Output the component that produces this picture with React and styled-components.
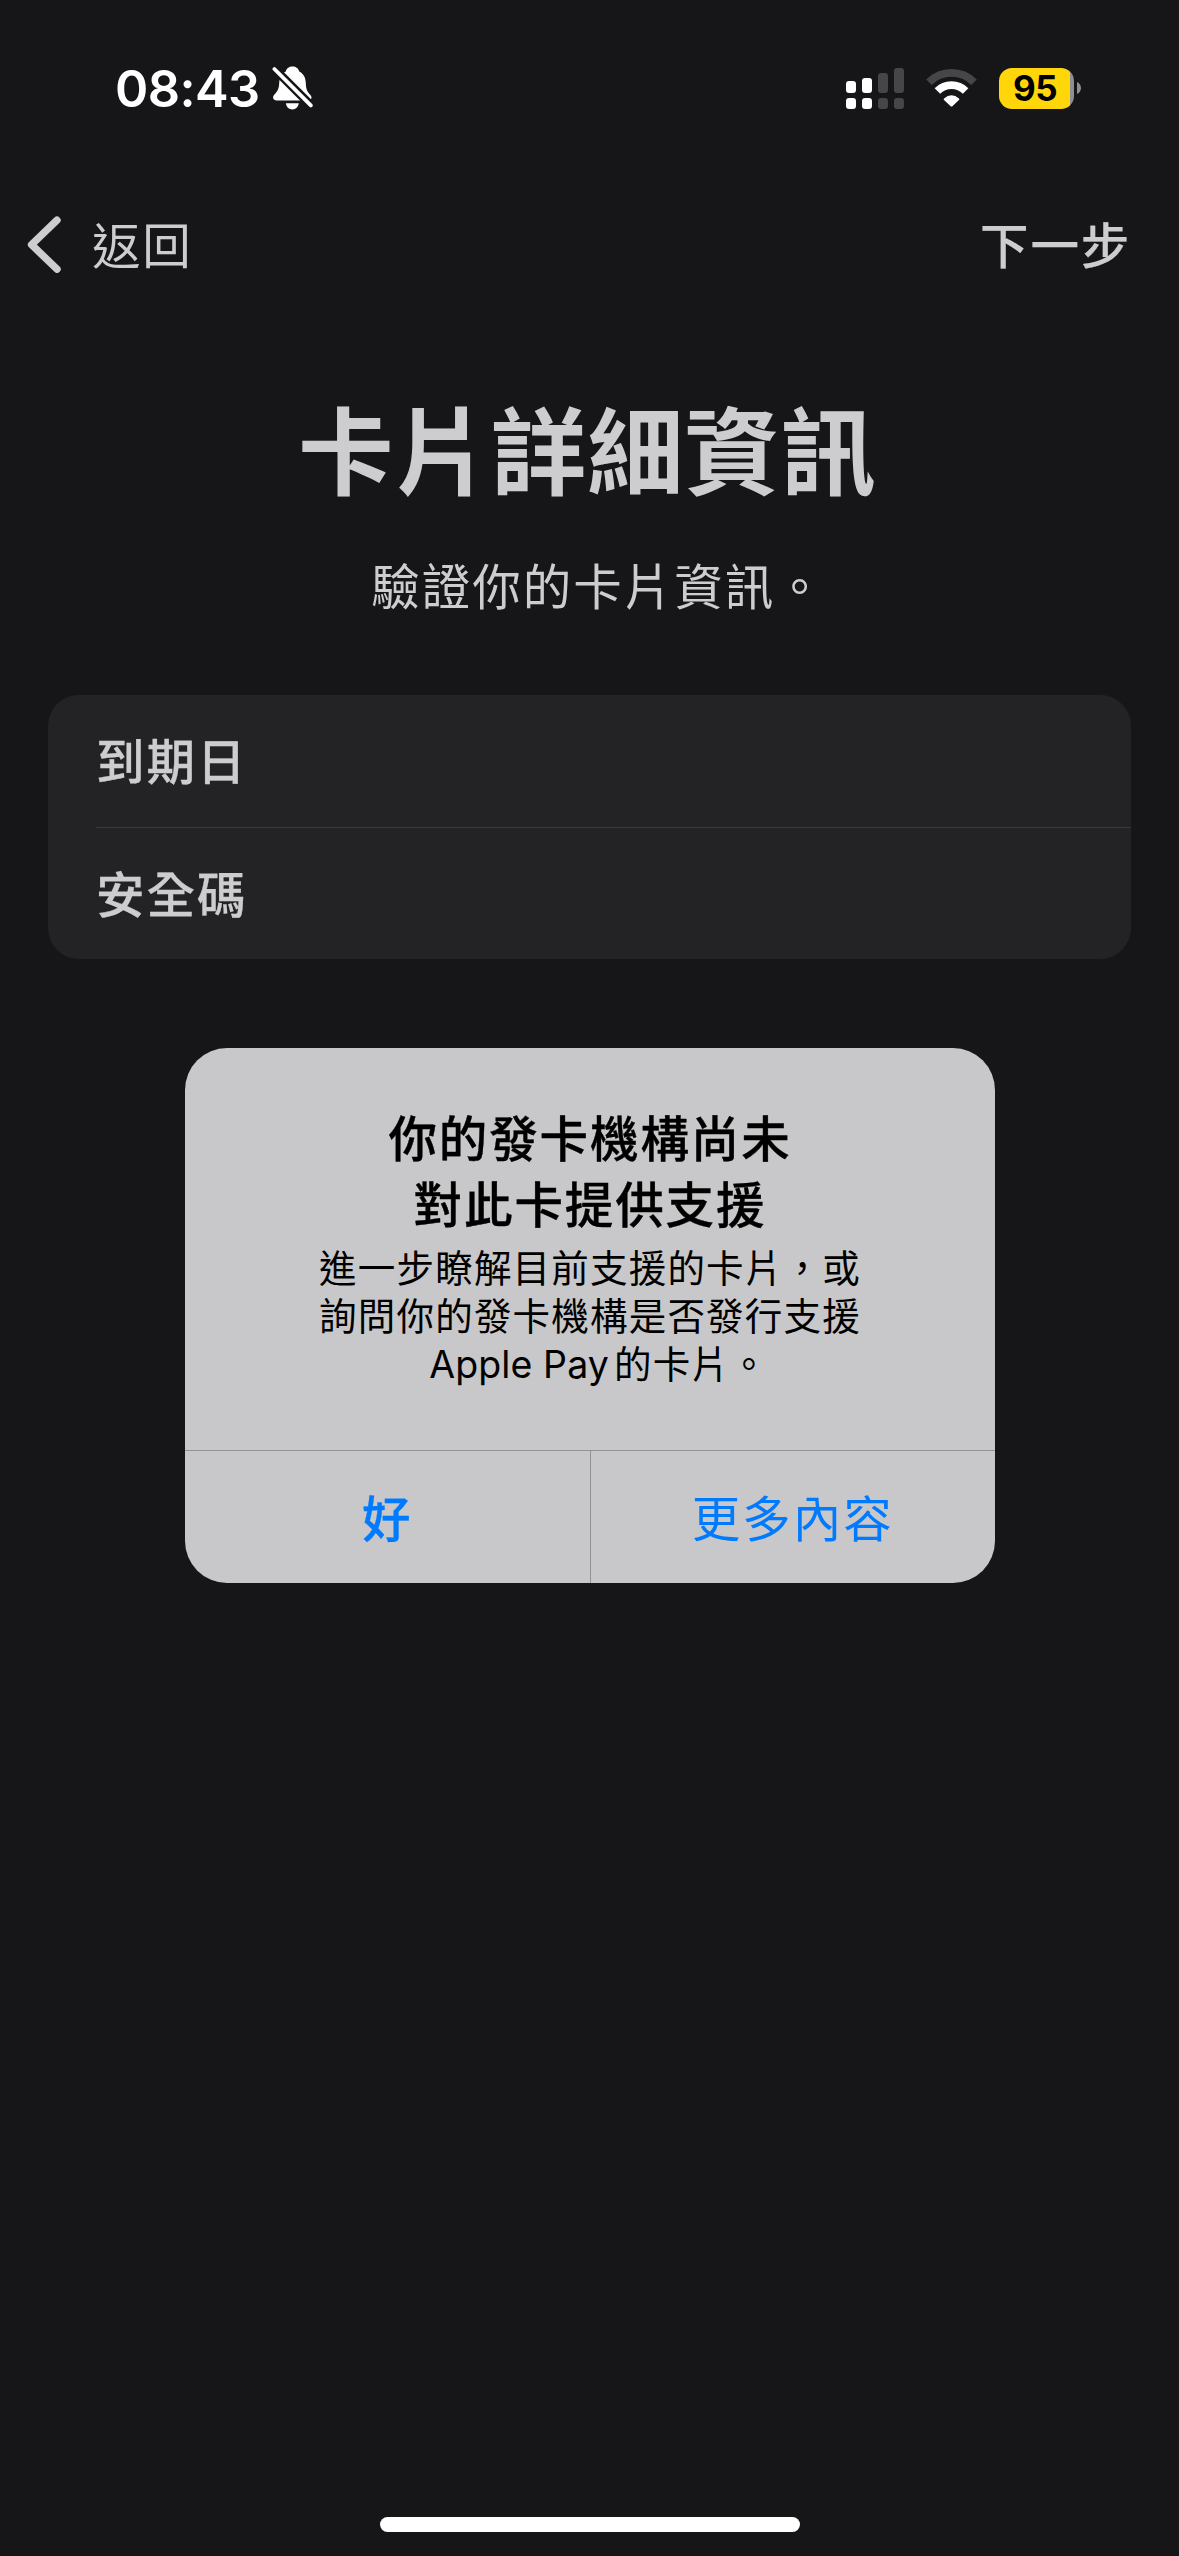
import React from "react";
import styled, { createGlobalStyle } from "styled-components";

const GlobalStyle = createGlobalStyle`
  * { box-sizing: border-box; }
  html, body { margin: 0; padding: 0; background: #161618; }
  button { border: 0; padding: 0; margin: 0; background: none; font: inherit; color: inherit; }
`;

const CJK = `"Noto Sans CJK TC", "Noto Sans CJK SC", sans-serif`;

const Screen = styled.div`
  position: relative;
  width: 1179px;
  height: 2556px;
  overflow: hidden;
  display: flex;
  flex-direction: column;
  background: #161618;
  color: #cdcdcf;
  font-family: ${CJK};
`;

const StatusBar = styled.header`
  height: 177px;
  padding: 58px 98px 59px 115px;
  display: flex;
  align-items: center;
  justify-content: space-between;
  color: #fff;
`;

const StatusGroup = styled.div`
  display: flex;
  align-items: center;
  gap: ${(p) => p.$gap}px;
`;

const Clock = styled.span`
  width: 146px;
  padding-top: 1px;
  font: 600 50.5px/60px Inter, sans-serif;
  letter-spacing: -0.6px;
  white-space: nowrap;
`;

const Battery = styled.div`
  display: flex;
  align-items: center;
  gap: 3px;
`;

const BatteryBody = styled.div`
  width: 75px;
  height: 41px;
  border-radius: 13px;
  display: flex;
  justify-content: center;
  align-items: center;
  padding-right: 3px;
  background: linear-gradient(to right, #ffd60a 71px, #8e8e93 71px);
  color: #000;
  font: 650 35px/41px Inter, sans-serif;
  letter-spacing: -0.6px;
`;

const NavBar = styled.nav`
  height: 132px;
  padding: 0 48px 0 27px;
  display: flex;
  align-items: center;
  justify-content: space-between;
`;

const NavButton = styled.button`
  display: flex;
  align-items: center;
  gap: 30px;
  padding-bottom: 1px;
  font-size: 48.5px;
  line-height: 60px;
  letter-spacing: 1.8px;
  font-weight: ${(p) => (p.$strong ? 500 : 400)};
  -webkit-text-stroke: ${(p) => (p.$strong ? 0.2 : 0)}px currentColor;
`;

const Heading = styled.section`
  padding: 88px 0 81px;
  display: flex;
  flex-direction: column;
  align-items: center;
  gap: 57px;
`;

const Title = styled.h1`
  margin: 0;
  padding-right: 4px;
  font-size: 95.5px;
  line-height: 100px;
  font-weight: 700;
  letter-spacing: 1px;
`;

const Subtitle = styled.p`
  margin: 0;
  padding-left: 18px;
  font-size: 48.5px;
  line-height: 60px;
  letter-spacing: 2px;
`;

const Form = styled.div`
  margin: 0 48px;
  height: 264px;
  border-radius: 31px;
  background: #232325;
  display: flex;
  flex-direction: column;
  padding-left: 48px;
`;

const Field = styled.label`
  flex: 1;
  display: flex;
  align-items: center;
  padding-bottom: 3px;
  font-size: 48.5px;
  line-height: 60px;
  font-weight: 500;
  letter-spacing: 2px;
  -webkit-text-stroke: 0.3px currentColor;

  & + & {
    border-top: 1px solid #38383b;
  }
`;

const Overlay = styled.div`
  position: absolute;
  inset: 0;
  padding: 177px 0 102px 1px;
  display: flex;
  align-items: center;
  justify-content: center;
`;

const Alert = styled.div`
  width: 810px;
  height: 535px;
  border-radius: 42px;
  background: #c8c8ca;
  color: #000;
  display: flex;
  flex-direction: column;
  overflow: hidden;
`;

const AlertContent = styled.div`
  flex: 1;
  padding-top: 55px;
  text-align: center;
  white-space: nowrap;
`;

const AlertTitle = styled.h2`
  margin: 0;
  font-size: 48.5px;
  line-height: 66px;
  font-weight: 500;
  letter-spacing: 1.9px;
  -webkit-text-stroke: 0.4px currentColor;
`;

const AlertText = styled.p`
  margin: 10px 0 0;
  font-family: Inter, ${CJK};
  font-size: 37.5px;
  line-height: 48px;
  letter-spacing: 1.2px;
`;

const LastLine = styled.span`
  padding-left: 18px;
`;

const Latin = styled.span`
  letter-spacing: 0.1px;
  margin-right: 5px;
`;

const AlertActions = styled.div`
  height: 133px;
  border-top: 1px solid #929295;
  display: flex;
`;

const AlertButton = styled.button`
  flex: 1;
  padding-bottom: 3px;
  color: #007aff;
  font-size: 48.5px;
  line-height: 60px;
  letter-spacing: 2px;
  font-weight: ${(p) => (p.$strong ? 500 : 400)};
  -webkit-text-stroke: ${(p) => (p.$strong ? 0.3 : 0)}px currentColor;

  & + & {
    border-left: 1px solid #929295;
  }
`;

const HomeIndicator = styled.div`
  width: 420px;
  height: 15px;
  margin: auto auto 24px;
  border-radius: 8px;
  background: #fff;
`;

const BellOff = () => (
  <svg width="41" height="44" viewBox="0 0 41 44">
    <path d="M20.5 0.5 C24 0.5 26.6 2.6 27.2 5.4 C31.6 7.4 33.6 11.6 33.8 17 C34 23 35 25.6 38.4 29 C40.4 31.4 39.6 34.4 36.4 34.4 H4.6 C1.2 34.4 0 31.2 2.2 28.8 C5.6 25 7 23 7.2 17 C7.4 11.6 9.6 7.4 13.8 5.4 C14.4 2.6 17 0.5 20.5 0.5 Z" fill="#fff" />
    <path d="M13.8 37.2 H26.8 C26.2 41 23.6 43.4 20.3 43.4 C17 43.4 14.4 41 13.8 37.2 Z" fill="#fff" />
    <path d="M-2 -1.6 L42 42.4" stroke="#161618" strokeWidth="8.6" />
    <path d="M2.4 3 L38.8 39.4" stroke="#fff" strokeWidth="3.8" strokeLinecap="round" />
  </svg>
);

const BARS = [
  { x: 0, y: 13, h: 12, on: true },
  { x: 16, y: 10, h: 15, on: true },
  { x: 32, y: 5, h: 20, on: false },
  { x: 48, y: 0, h: 25, on: false },
];

const Signal = () => (
  <svg width="58" height="41" viewBox="0 0 58 41">
    {BARS.map((b) => (
      <g key={b.x} fill={b.on ? "#fff" : "#464648"}>
        <rect x={b.x} y={b.y} width="10" height={b.h} rx="3" />
        <rect x={b.x} y="30" width="10" height="11" rx="3" />
      </g>
    ))}
  </svg>
);

const Wifi = () => (
  <svg width="51" height="38" viewBox="0 0 51 38">
    <path d="M3 13.2 A32 32 0 0 1 48 13.2" fill="none" stroke="#464648" strokeWidth="7.8" />
    <path d="M11.4 22 A20 20 0 0 1 39.6 22" fill="none" stroke="#fff" strokeWidth="7.8" />
    <path d="M18 29.6 Q25.5 23 33 29.6 Q33.8 30.2 33 31 L26.6 37 Q25.5 38 24.4 37 L18 31 Q17.2 30.2 18 29.6 Z" fill="#fff" />
  </svg>
);

const Chevron = () => (
  <svg width="35" height="60" viewBox="0 0 35 60">
    <path d="M30 7.2 L4.6 31.7 L30 56.2" fill="none" stroke="#cdcdcf" strokeWidth="7.4" strokeLinecap="round" strokeLinejoin="round" />
  </svg>
);

const BatteryCap = () => (
  <svg width="4" height="12" viewBox="0 0 4 12">
    <path d="M0 0 C5.3 2 5.3 10 0 12 Z" fill="#8e8e93" />
  </svg>
);

export default function App() {
  return (
    <Screen>
      <GlobalStyle />
      <StatusBar>
        <StatusGroup $gap={11}>
          <Clock>08:43</Clock>
          <BellOff />
        </StatusGroup>
        <StatusGroup $gap={22}>
          <Signal />
          <Wifi />
          <Battery>
            <BatteryBody>95</BatteryBody>
            <BatteryCap />
          </Battery>
        </StatusGroup>
      </StatusBar>
      <NavBar>
        <NavButton>
          <Chevron />
          返回
        </NavButton>
        <NavButton $strong>下一步</NavButton>
      </NavBar>
      <Heading>
        <Title>卡片詳細資訊</Title>
        <Subtitle>驗證你的卡片資訊。</Subtitle>
      </Heading>
      <Form>
        <Field>到期日</Field>
        <Field>安全碼</Field>
      </Form>
      <HomeIndicator />
      <Overlay>
        <Alert role="alertdialog">
          <AlertContent>
            <AlertTitle>
              你的發卡機構尚未
              <br />
              對此卡提供支援
            </AlertTitle>
            <AlertText>
              進一步瞭解目前支援的卡片，或
              <br />
              詢問你的發卡機構是否發行支援
              <br />
              <LastLine>
                <Latin>Apple Pay</Latin>的卡片。
              </LastLine>
            </AlertText>
          </AlertContent>
          <AlertActions>
            <AlertButton $strong>好</AlertButton>
            <AlertButton>更多內容</AlertButton>
          </AlertActions>
        </Alert>
      </Overlay>
    </Screen>
  );
}
